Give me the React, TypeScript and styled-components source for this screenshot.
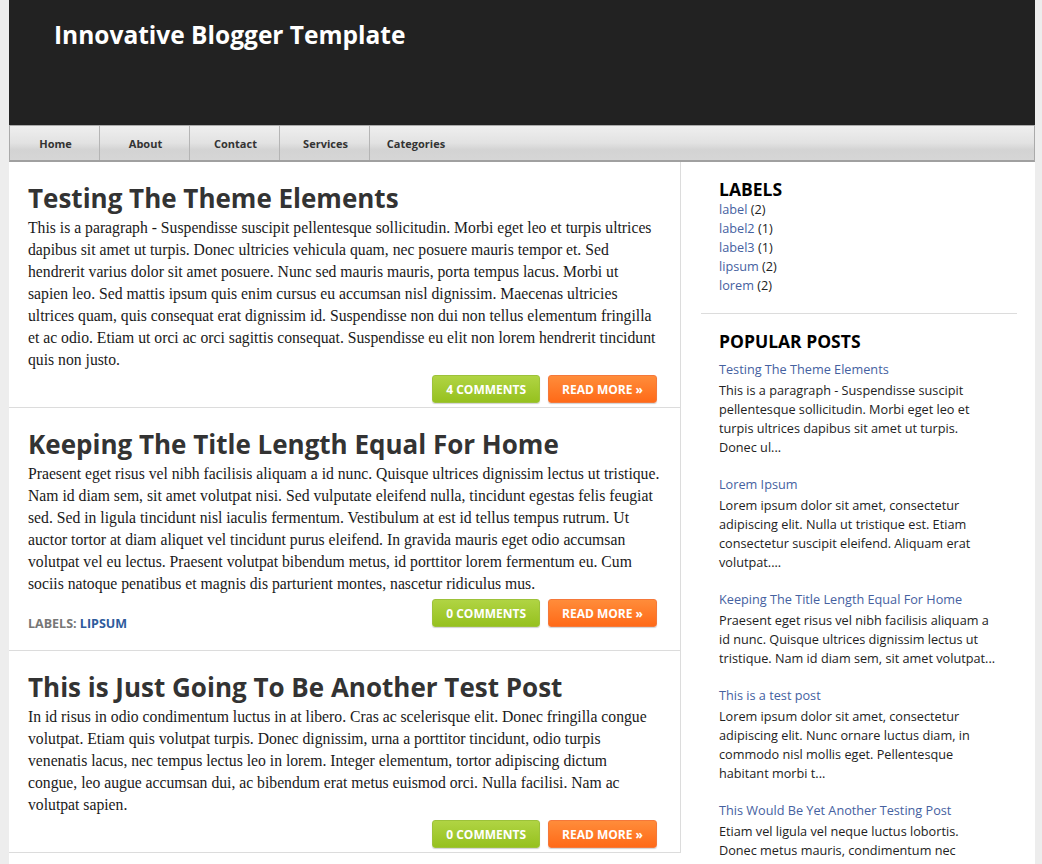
import * as React from 'react';
import styled, { createGlobalStyle } from 'styled-components';

const GlobalStyle = createGlobalStyle`
	body {
		margin: 0;
		background: #ededed;
		font-family: 'Open Sans', 'Liberation Sans', sans-serif;
	}
	a {
		text-decoration: none;
	}
`;

const Page = styled.div`
	width: 1026px;
	margin-left: 9px;
	background: #fff;
`;

const Header = styled.header`
	height: 125px;
	background: #222;
	box-sizing: border-box;
	padding: 18px 0 0 45px;
`;

const SiteTitle = styled.h1`
	margin: 0;
	color: #fff;
	font-size: 24.5px;
	font-weight: 700;
	line-height: 34px;
`;

const Nav = styled.nav`
	display: flex;
	height: 37px;
	box-sizing: border-box;
	border: 1px solid #aaa;
	border-bottom: 2px solid #a0a0a0;
	background: linear-gradient(#efefef, #e2e2e2 50%, #d3d3d3 70%, #d6d6d6);
`;

const NavItem = styled.a<{ $last?: boolean }>`
	width: 90px;
	box-sizing: border-box;
	display: flex;
	align-items: center;
	justify-content: center;
	padding-left: 2px;
	font-size: 11px;
	font-weight: 700;
	color: #333;
	border-right: ${(p) => (p.$last ? 'none' : '1px solid #b5b5b5')};
`;

const Body = styled.div`
	display: flex;
	align-items: flex-start;
`;

const Main = styled.main`
	width: 671px;
	flex-shrink: 0;
	border-right: 1px solid #dcdcdc;
`;

const Post = styled.article`
	padding: 17px 23px 4px 19px;
	border-bottom: 1px solid #dcdcdc;
`;

const PostTitle = styled.h2`
	margin: 0;
	font-size: 26px;
	line-height: 38px;
	font-weight: 700;
	color: #333;
`;

const PostText = styled.p`
	margin: 0;
	font-family: 'Liberation Serif', 'DejaVu Serif', serif;
	font-size: 15.7px;
	line-height: 22px;
	color: #1a1a1a;
`;

const Line = styled.span`
	display: block;
	white-space: nowrap;
`;

const PostFooter = styled.div`
	display: flex;
	align-items: flex-start;
	margin-top: 4px;
`;

const PostLabels = styled.div`
	padding: 18px 0 15px;
	font-size: 12.5px;
	line-height: 14px;
	font-weight: 700;
	color: #777;
	text-transform: uppercase;
`;

const LabelLink = styled.a`
	color: #2e5b9c;
`;

const Buttons = styled.div`
	display: flex;
	gap: 8px;
	margin-left: auto;
`;

const Button = styled.a<{ $tone: 'green' | 'orange' }>`
	display: flex;
	align-items: center;
	justify-content: center;
	height: 28px;
	box-sizing: border-box;
	padding: 0 13px;
	border-radius: 3px;
	font-size: 12px;
	font-weight: 700;
	color: #fff;
	text-transform: uppercase;
	border: 1px solid ${(p) => (p.$tone === 'green' ? '#9dc23a' : '#f5783a')};
	box-shadow: 0 1px 1px rgba(0, 0, 0, 0.18);
	background: ${(p) =>
		p.$tone === 'green'
			? 'linear-gradient(#b0d443, #96c11f)'
			: 'linear-gradient(#ff8c3a, #ff6a18)'};
`;

const Sidebar = styled.aside`
	flex: 1;
	min-width: 0;
	padding: 16px 18px 0 20px;
`;

const Widget = styled.section<{ $divider?: boolean }>`
	padding: 0 18px 18px;
	margin-bottom: 16px;
	border-bottom: ${(p) => (p.$divider ? '1px solid #dcdcdc' : 'none')};
`;

const WidgetTitle = styled.h3`
	margin: 0;
	font-size: 17.5px;
	line-height: 22px;
	font-weight: 700;
	color: #000;
	text-transform: uppercase;
`;

const LabelList = styled.ul`
	margin: 0;
	padding: 0;
	list-style: none;
	font-size: 12.7px;
	line-height: 19px;
	color: #222;
`;

const SideLink = styled.a`
	color: #45619f;
`;

const PopularList = styled.div`
	margin-top: 8px;
	width: 278px;
`;

const PopularItem = styled.div`
	margin-bottom: 18px;
	font-size: 12.7px;
	line-height: 19px;
`;

const PopularText = styled.div`
	margin-top: 2px;
	color: #222;
`;

const posts = [
	{
		title: 'Testing The Theme Elements',
		lines: [
			'This is a paragraph - Suspendisse suscipit pellentesque sollicitudin. Morbi eget leo et turpis ultrices',
			'dapibus sit amet ut turpis. Donec ultricies vehicula quam, nec posuere mauris tempor et. Sed',
			'hendrerit varius dolor sit amet posuere. Nunc sed mauris mauris, porta tempus lacus. Morbi ut',
			'sapien leo. Sed mattis ipsum quis enim cursus eu accumsan nisl dignissim. Maecenas ultricies',
			'ultrices quam, quis consequat erat dignissim id. Suspendisse non dui non tellus elementum fringilla',
			'et ac odio. Etiam ut orci ac orci sagittis consequat. Suspendisse eu elit non lorem hendrerit tincidunt',
			'quis non justo.',
		],
		comments: 4,
		labels: [] as string[],
	},
	{
		title: 'Keeping The Title Length Equal For Home',
		lines: [
			'Praesent eget risus vel nibh facilisis aliquam a id nunc. Quisque ultrices dignissim lectus ut tristique.',
			'Nam id diam sem, sit amet volutpat nisi. Sed vulputate eleifend nulla, tincidunt egestas felis feugiat',
			'sed. Sed in ligula tincidunt nisl iaculis fermentum. Vestibulum at est id tellus tempus rutrum. Ut',
			'auctor tortor at diam aliquet vel tincidunt purus eleifend. In gravida mauris eget odio accumsan',
			'volutpat vel eu lectus. Praesent volutpat bibendum metus, id porttitor lorem fermentum eu. Cum',
			'sociis natoque penatibus et magnis dis parturient montes, nascetur ridiculus mus.',
		],
		comments: 0,
		labels: ['lipsum'],
	},
	{
		title: 'This is Just Going To Be Another Test Post',
		lines: [
			'In id risus in odio condimentum luctus in at libero. Cras ac scelerisque elit. Donec fringilla congue',
			'volutpat. Etiam quis volutpat turpis. Donec dignissim, urna a porttitor tincidunt, odio turpis',
			'venenatis lacus, nec tempus lectus leo in lorem. Integer elementum, tortor adipiscing dictum',
			'congue, leo augue accumsan dui, ac bibendum erat metus euismod orci. Nulla facilisi. Nam ac',
			'volutpat sapien.',
		],
		comments: 0,
		labels: [] as string[],
	},
];

const labels = [
	['label', 2],
	['label2', 1],
	['label3', 1],
	['lipsum', 2],
	['lorem', 2],
];

const popular = [
	{
		title: 'Testing The Theme Elements',
		text: 'This is a paragraph - Suspendisse suscipit pellentesque sollicitudin. Morbi eget leo et turpis ultrices dapibus sit amet ut turpis. Donec ul...',
	},
	{
		title: 'Lorem Ipsum',
		text: 'Lorem ipsum dolor sit amet, consectetur adipiscing elit. Nulla ut tristique est. Etiam consectetur suscipit eleifend. Aliquam erat volutpat....',
	},
	{
		title: 'Keeping The Title Length Equal For Home',
		text: 'Praesent eget risus vel nibh facilisis aliquam a id nunc. Quisque ultrices dignissim lectus ut tristique. Nam id diam sem, sit amet volutpat...',
	},
	{
		title: 'This is a test post',
		text: 'Lorem ipsum dolor sit amet, consectetur adipiscing elit. Nunc ornare luctus diam, in commodo nisl mollis eget. Pellentesque habitant morbi t...',
	},
	{
		title: 'This Would Be Yet Another Testing Post',
		text: 'Etiam vel ligula vel neque luctus lobortis. Donec metus mauris, condimentum nec pharetra sit amet, tincidunt at sapien...',
	},
];

const App = () => {
	return (
		<Page>
			<GlobalStyle />
			<Header>
				<SiteTitle>Innovative Blogger Template</SiteTitle>
			</Header>
			<Nav>
				<NavItem href="#">Home</NavItem>
				<NavItem href="#">About</NavItem>
				<NavItem href="#">Contact</NavItem>
				<NavItem href="#">Services</NavItem>
				<NavItem href="#" $last>
					Categories
				</NavItem>
			</Nav>
			<Body>
				<Main>
					{posts.map((post) => (
						<Post key={post.title}>
							<PostTitle>{post.title}</PostTitle>
							<PostText>
								{post.lines.map((line) => (
									<Line key={line}>{line}</Line>
								))}
							</PostText>
							<PostFooter>
								{post.labels.length > 0 && (
									<PostLabels>
										Labels: <LabelLink href="#">{post.labels.join(', ')}</LabelLink>
									</PostLabels>
								)}
								<Buttons>
									<Button href="#" $tone="green">
										{post.comments} Comments
									</Button>
									<Button href="#" $tone="orange">
										Read More »
									</Button>
								</Buttons>
							</PostFooter>
						</Post>
					))}
				</Main>
				<Sidebar>
					{/* labels */}
					<Widget $divider>
						<WidgetTitle>Labels</WidgetTitle>
						<LabelList>
							{labels.map(([name, count]) => (
								<li key={name}>
									<SideLink href="#">{name}</SideLink> ({count})
								</li>
							))}
						</LabelList>
					</Widget>
					{/* popular posts */}
					<Widget>
						<WidgetTitle>Popular Posts</WidgetTitle>
						<PopularList>
							{popular.map((item) => (
								<PopularItem key={item.title}>
									<SideLink href="#">{item.title}</SideLink>
									<PopularText>{item.text}</PopularText>
								</PopularItem>
							))}
						</PopularList>
					</Widget>
				</Sidebar>
			</Body>
		</Page>
	);
};

export default App;
